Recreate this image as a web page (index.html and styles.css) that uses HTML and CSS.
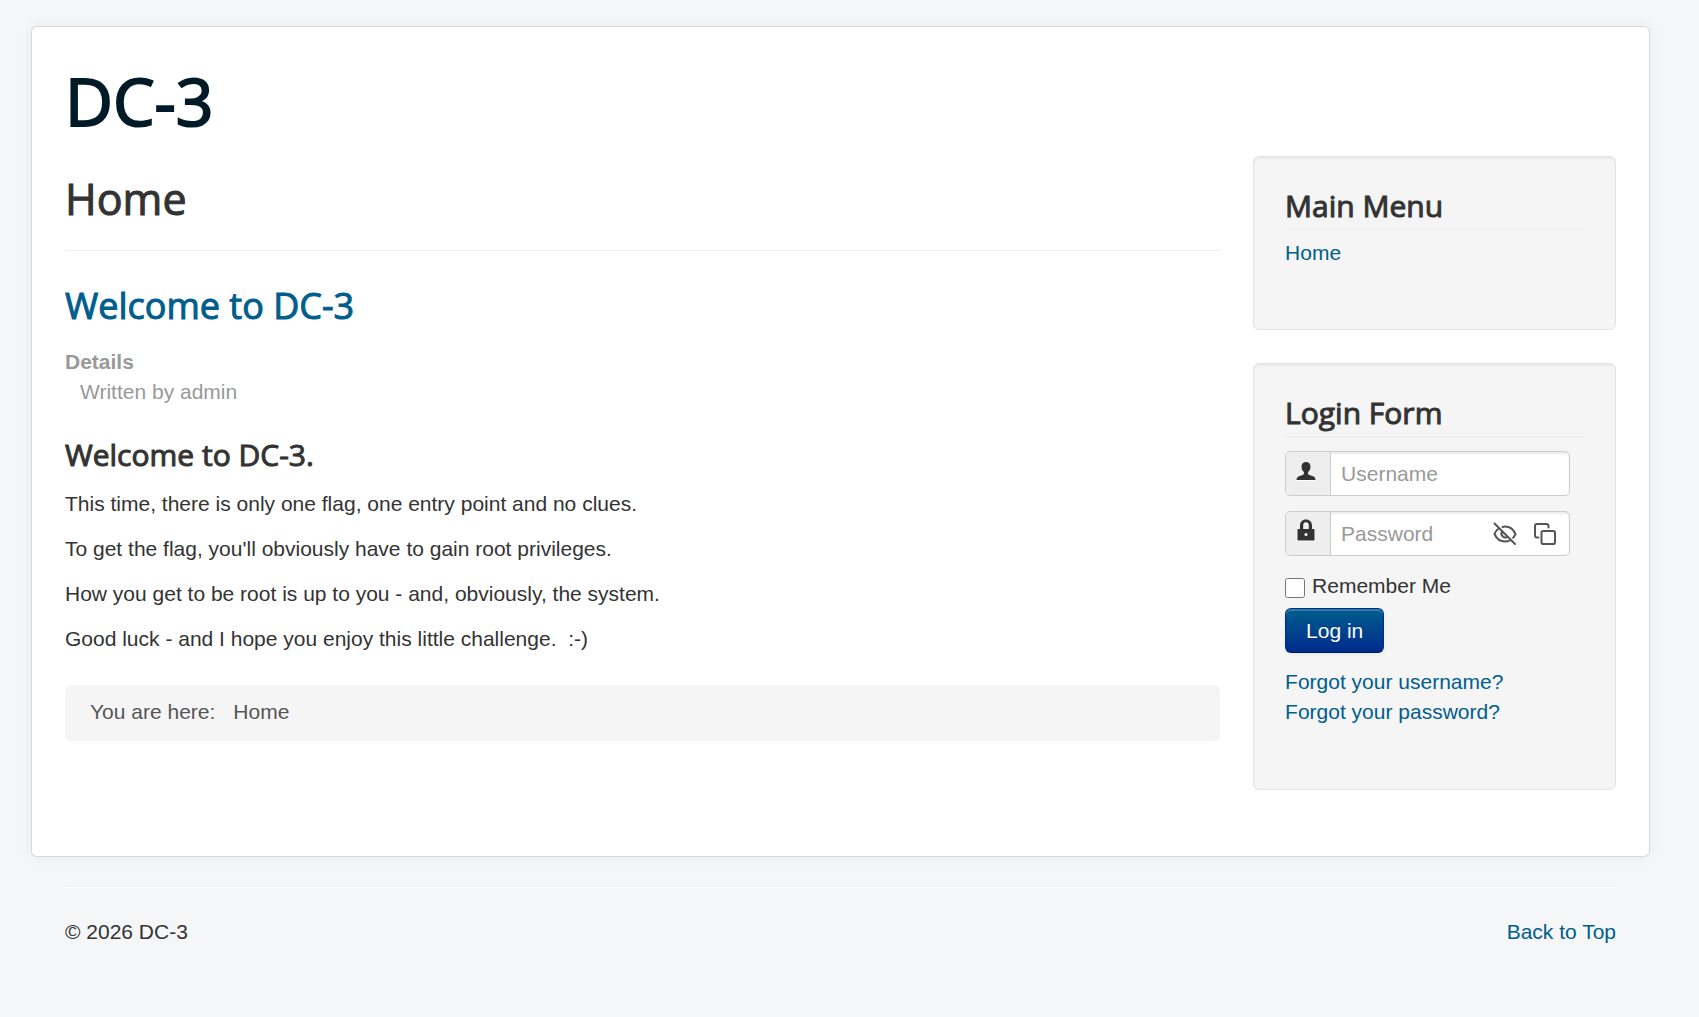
FILE: index.html
```html
<!DOCTYPE html>
<html lang="en">
<head>
    <meta charset="UTF-8">
    <meta name="viewport" content="width=device-width, initial-scale=1.0">
    <title>Home</title>
    <link rel="stylesheet" href="styles.css">
</head>
<body id="top">
    <div class="container">
        <header class="header">
            <a class="site-title" href="#">DC-3</a>
        </header>

        <div class="row">
            <main class="content">
                <h1 class="page-header">Home</h1>

                <article class="item">
                    <h2><a href="#">Welcome to DC-3</a></h2>
                    <dl class="article-info">
                        <dt>Details</dt>
                        <dd>Written by admin</dd>
                    </dl>
                    <h3>Welcome to DC-3.</h3>
                    <p>This time, there is only one flag, one entry point and no clues.</p>
                    <p>To get the flag, you'll obviously have to gain root privileges.</p>
                    <p>How you get to be root is up to you - and, obviously, the system.</p>
                    <p>Good luck - and I hope you enjoy this little challenge.&nbsp; :-)</p>
                </article>

                <ul class="breadcrumb">
                    <li>You are here:</li>
                    <li>Home</li>
                </ul>
            </main>

            <aside class="sidebar">
                <div class="well">
                    <h3>Main Menu</h3>
                    <ul class="menu">
                        <li><a href="#">Home</a></li>
                    </ul>
                </div>

                <div class="well">
                    <h3>Login Form</h3>
                    <form class="login-form">
                        <div class="input-group">
                            <label class="add-on" for="username" aria-label="Username">
                                <svg width="20" height="22" viewBox="0 -2 20 22"><path d="M10 1c2.800 0 4.500 1.900 4.500 4.700 0 2.300-1 4.300-2.400 5.300v1.500c0 .8.500 1.200 1.400 1.500l3.400 1.200c1.800.7 2.600 1.800 2.600 3.800H.5c0-2 .8-3.100 2.600-3.800L6.500 14c.9-.3 1.400-.7 1.400-1.500V11C6.500 10 5.500 8 5.500 5.700 5.500 2.900 7.200 1 10 1z"/></svg>
                            </label>
                            <input type="text" id="username" name="username" placeholder="Username">
                        </div>
                        <div class="input-group">
                            <label class="add-on" for="password" aria-label="Password">
                                <svg width="20" height="22" viewBox="0 0 20 22"><path fill-rule="evenodd" d="M4 10V6.500C4 3 6.500.500 10 .500S16 3 16 6.500V10h1.500c.6 0 1 .4 1 1v9.500c0 .6-.4 1-1 1h-15c-.6 0-1-.4-1-1V11c0-.6.4-1 1-1zm3.200 0h5.600V6.500c0-2-1-3.200-2.800-3.200S7.200 4.500 7.200 6.500zM10 14a1.600 1.600 0 1 0 0 3.200 1.600 1.600 0 0 0 0-3.200z"/></svg>
                            </label>
                            <input type="password" id="password" name="password" placeholder="Password">
                            <div class="field-tools">
                                <button type="button" aria-label="Show password">
                                    <svg width="24" height="24" viewBox="0 0 24 24"><path d="M1.500 1.500 22 22M5.500 6.500C3.700 8 2.400 9.900 1.500 12c2 4.600 5.800 7.500 10.500 7.500 1.900 0 3.600-.5 5.200-1.400M9.500 5c.8-.3 1.600-.5 2.500-.5 4.700 0 8.500 2.900 10.500 7.500-.6 1.400-1.400 2.700-2.400 3.800M9.300 9.400a3.700 3.700 0 0 0 5.200 5.200"/></svg>
                                </button>
                                <button type="button" aria-label="Copy password">
                                    <svg width="24" height="24" viewBox="0 0 24 24"><rect x="8.500" y="9" width="13.500" height="13" rx="1.800"/><path d="M5.500 15.500H4A2 2 0 0 1 2 13.500V4a2 2 0 0 1 2-2h9.500a2 2 0 0 1 2 2v1.500"/></svg>
                                </button>
                            </div>
                        </div>
                        <div class="remember">
                            <input type="checkbox" id="remember" name="remember">
                            <label for="remember">Remember Me</label>
                        </div>
                        <button type="submit" class="btn-primary">Log in</button>
                        <ul class="menu">
                            <li><a href="#">Forgot your username?</a></li>
                            <li><a href="#">Forgot your password?</a></li>
                        </ul>
                    </form>
                </div>
            </aside>
        </div>
    </div>

    <footer class="footer">
        <hr>
        <div class="footer-row">
            <p>© 2026 DC-3</p>
            <a href="#top">Back to Top</a>
        </div>
    </footer>
</body>
</html>
```
FILE: styles.css
```css
:root {
    --text: #333;
    --link: #005e8d;
    --page: #f4f6f7;
    --border: #ccc;
}

* {
    margin: 0;
    padding: 0;
    box-sizing: border-box;
}

body {
    background: var(--page);
    color: var(--text);
    font-family: "Liberation Sans", Arial, sans-serif;
    font-size: 21px;
    line-height: 30px;
    padding: 26px 49px 26px 31px;
}

a {
    color: var(--link);
    text-decoration: none;
}

a:hover {
    text-decoration: underline;
}

ul {
    list-style: none;
}

h1, h2, h3, .site-title {
    font-family: "Open Sans", sans-serif;
    font-weight: 400;
    -webkit-text-stroke: 1px currentColor;
}

h2 {
    font-size: 36px;
    line-height: 50px;
    margin: 30px 0 16px;
}

h3 {
    font-size: 30px;
    line-height: 35px;
}

.container {
    background: #fff;
    border: 1px solid rgba(0, 0, 0, 0.15);
    border-radius: 6px;
    box-shadow: 0 0 16px rgba(0, 0, 0, 0.05);
    padding: 32px 33px 33px;
}

.header {
    margin-bottom: 15px;
}

.site-title {
    display: block;
    color: #001a27;
    font-size: 66px;
    line-height: 82px;
    -webkit-text-stroke-width: 2px;
}

.row {
    display: flex;
    gap: 33px;
}

.content {
    flex: 1;
    min-width: 0;
}

.page-header {
    font-size: 43px;
    line-height: 50px;
    padding: 18px 0 26px;
    border-bottom: 1px solid #eee;
}

.article-info {
    color: #999;
    margin-bottom: 30px;
}

.article-info dt {
    font-weight: bold;
}

.article-info dd {
    padding-left: 15px;
}

.item h3 {
    margin-bottom: 17px;
}

.item p {
    margin-bottom: 15px;
}

.breadcrumb {
    display: flex;
    gap: 18px;
    margin-top: 31px;
    padding: 12px 25px 14px;
    background: #f5f5f5;
    border-radius: 6px;
    color: #555;
    text-shadow: 0 1px 0 #fff;
}

/* Sidebar */
.sidebar {
    width: 23.4%;
}

.well {
    min-height: 174px;
    margin-bottom: 33px;
    padding: 31px;
    background: #f5f5f5;
    border: 1px solid #e3e3e3;
    border-radius: 6px;
    box-shadow: inset 0 2px 2px rgba(0, 0, 0, 0.05);
}

.well h3 {
    margin-bottom: 8px;
    padding-bottom: 6px;
    border-bottom: 1px solid #eee;
}

.login-form {
    padding: 6px 0 31px;
}

.input-group {
    position: relative;
    display: flex;
    max-width: 285px;
    height: 45px;
    margin-bottom: 15px;
    background: #fff;
    border: 1px solid var(--border);
    border-radius: 5px;
    box-shadow: inset 0 2px 2px rgba(0, 0, 0, 0.075);
    overflow: hidden;
}

.add-on {
    width: 45px;
    padding: 7px 10px;
    line-height: 0;
    background: #eee;
    border-right: 1px solid var(--border);
}

.add-on svg {
    fill: var(--text);
    filter: drop-shadow(0 1px 0 #fff);
}

.input-group input {
    flex: 1;
    min-width: 0;
    padding: 0 10px;
    border: none;
    outline: none;
    background: transparent;
    color: #555;
    font: inherit;
}

.input-group input::placeholder {
    color: #999;
}

/* Buttons lying over the right end of the password box */
.field-tools {
    position: absolute;
    top: 0;
    right: 12px;
    height: 100%;
    display: flex;
    align-items: center;
    gap: 16px;
}

.field-tools button {
    height: 24px;
    border: none;
    background: none;
    cursor: pointer;
}

.field-tools svg {
    display: block;
    fill: none;
    stroke: #555;
    stroke-width: 2;
    stroke-linecap: round;
    stroke-linejoin: round;
}

.remember {
    display: flex;
    gap: 7px;
    margin-bottom: 7px;
}

.remember input {
    width: 20px;
    height: 20px;
    margin-top: 7px;
}

.btn-primary {
    display: block;
    height: 45px;
    margin-bottom: 14px;
    padding: 0 20px;
    border: 1px solid #002a8d;
    border-bottom-color: #001a57;
    border-radius: 6px;
    background: linear-gradient(#005e8d, #002a8d);
    box-shadow: inset 0 2px 0 rgba(255, 255, 255, 0.2), 0 2px 3px rgba(0, 0, 0, 0.05);
    color: #fff;
    font: inherit;
    text-shadow: 0 -1px 0 rgba(0, 0, 0, 0.25);
    cursor: pointer;
}

/* Footer */
.footer {
    padding: 29px 34px 40px;
}

.footer hr {
    border: none;
    border-top: 1px solid #eee;
    border-bottom: 1px solid #fff;
    margin-bottom: 29px;
}

.footer-row {
    display: flex;
    justify-content: space-between;
}

@media (max-width: 900px) {
    .row {
        flex-direction: column;
    }

    .sidebar {
        width: 100%;
    }
}
```
